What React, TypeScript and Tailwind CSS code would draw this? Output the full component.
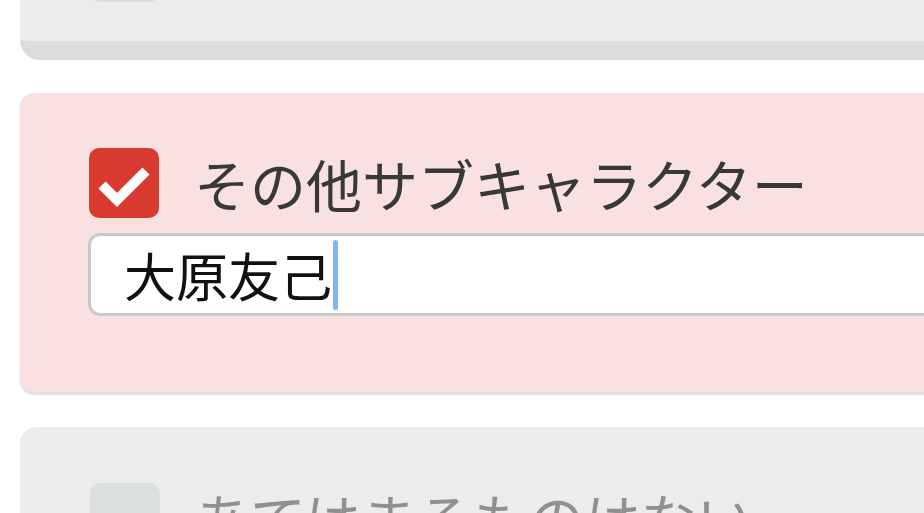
import { FC } from 'react';

const font = { fontFamily: '"Noto Sans CJK JP", "Noto Sans", sans-serif' };

const CheckMark: FC = () => (
  <svg viewBox="0 0 70 70" className="h-[70px] w-[70px]">
    <polyline
      points="13,37 28,52 57,23"
      fill="none"
      stroke="#ffffff"
      strokeWidth="10"
      strokeLinejoin="miter"
    />
  </svg>
);

export default function App() {
  return (
    <div
      className="h-[513px] w-[924px] overflow-hidden bg-white"
      style={font}
    >
      {/* previous option (unchecked), scrolled mostly out of view */}
      <div className="ml-[20px] flex h-[60px] w-[940px] items-start rounded-b-[20px] border-b-[19px] border-[#dcdcdc] bg-[#ececec] pl-[70px]">
        <div className="-mt-[68px] h-[70px] w-[70px] shrink-0 rounded-[10px] bg-[#dcdfe0]" />
      </div>

      {/* selected option */}
      <div className="ml-[20px] mt-[33px] flex w-[940px] flex-col gap-[15px] rounded-[14px] bg-[#f9e1e2] pb-[76px] pl-[68px] pt-[55px] shadow-[0_3px_2px_rgba(0,0,0,0.13)]">
        <div className="flex items-center gap-[35px]">
          <div className="ml-[1px] h-[70px] w-[70px] rounded-[10px] bg-[#d83a2f]">
            <CheckMark />
          </div>
          <span className="text-[56px] leading-none text-[#383838]">
            その他サブキャラクター
          </span>
        </div>
        <div className="flex h-[83px] items-center rounded-[12px] border-[3px] border-[#c9c9c9] bg-white pl-[33px]">
          <span className="text-[52px] leading-none text-[#111111]">大原友己</span>
          <span className="ml-[1px] h-[70px] w-[5px] rounded-full bg-[#82b3f3]" />
        </div>
      </div>

      {/* next option (unchecked) */}
      <div className="ml-[20px] mt-[35px] flex h-[200px] w-[940px] items-start gap-[35px] rounded-[16px] bg-[#ececec] pl-[70px] pt-[56px]">
        <div className="h-[70px] w-[70px] rounded-[10px] bg-[#dcdfe0]" />
        <span className="mt-[6px] text-[56px] leading-none text-[#909090]">
          あてはまるものはない
        </span>
      </div>
    </div>
  );
}
